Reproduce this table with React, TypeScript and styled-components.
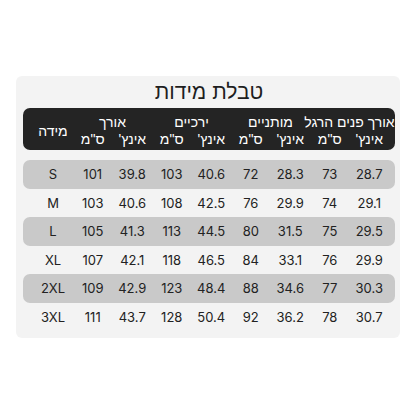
import * as React from 'react'
import styled, {createGlobalStyle} from 'styled-components'

const GlobalStyle = createGlobalStyle`
  html, body {
    margin: 0;
    padding: 0;
    background: #fff;
  }
`

const Page = styled.div`
  width: 416px;
  height: 416px;
  box-sizing: border-box;
  padding: 76px 16px 0 16px;
  background: #fff;
`

const Card = styled.div`
  width: 384px;
  box-sizing: border-box;
  padding: 0 5px 7px 7px;
  background: #f3f3f3;
  border-radius: 6px;
`

const Title = styled.h1`
  margin: 0;
  height: 32px;
  display: flex;
  align-items: center;
  justify-content: center;
  direction: rtl;
  font-family: "Liberation Sans", "DejaVu Sans", sans-serif;
  font-size: 21px;
  font-weight: 400;
  color: #1e1e1e;
`

const HeaderBar = styled.div`
  display: grid;
  grid-template-columns: 40px repeat(8, 1fr);
  grid-template-rows: 17px 17px;
  align-content: center;
  height: 42px;
  box-sizing: border-box;
  padding: 3px 6px 0 10px;
  margin-bottom: 10px;
  background: #242424;
  border-radius: 7px;
  color: #fff;
  font-family: "Liberation Sans", "DejaVu Sans", sans-serif;
  font-size: 14px;
`

const HeadCell = styled.div<{$span?: number; $rows?: number}>`
  direction: rtl;
  display: flex;
  align-items: center;
  justify-content: center;
  white-space: nowrap;
  grid-column: span ${p => p.$span || 1};
  grid-row: span ${p => p.$rows || 1};
`

const Row = styled.div<{$shaded: boolean}>`
  display: grid;
  grid-template-columns: 40px repeat(8, 1fr);
  height: 28.5px;
  padding: 0 6px 0 10px;
  background: ${p => (p.$shaded ? '#c9c9c9' : 'transparent')};
  border-radius: 7px;
  font-family: Inter, "Liberation Sans", sans-serif;
  font-size: 13px;
  color: #222;
`

const Cell = styled.div`
  display: flex;
  align-items: center;
  justify-content: center;
`

const groups = ['אורך', 'ירכיים', 'מותניים', 'אורך פנים הרגל']

const rows = [
  ['S', '101', '39.8', '103', '40.6', '72', '28.3', '73', '28.7'],
  ['M', '103', '40.6', '108', '42.5', '76', '29.9', '74', '29.1'],
  ['L', '105', '41.3', '113', '44.5', '80', '31.5', '75', '29.5'],
  ['XL', '107', '42.1', '118', '46.5', '84', '33.1', '76', '29.9'],
  ['2XL', '109', '42.9', '123', '48.4', '88', '34.6', '77', '30.3'],
  ['3XL', '111', '43.7', '128', '50.4', '92', '36.2', '78', '30.7'],
]

export default function App() {
  return (
    <Page>
      <GlobalStyle/>
      <Card>
        <Title>טבלת מידות</Title>
        <HeaderBar>
          <HeadCell $rows={2}>מידה</HeadCell>
          {groups.map(g => <HeadCell key={g} $span={2}>{g}</HeadCell>)}
          {groups.map(g => (
            <React.Fragment key={g + '-units'}>
              <HeadCell>ס"מ</HeadCell>
              <HeadCell>אינץ'</HeadCell>
            </React.Fragment>
          ))}
        </HeaderBar>
        {rows.map((r, i) => (
          <Row key={r[0]} $shaded={i % 2 === 0}>
            {r.map((v, j) => <Cell key={j}>{v}</Cell>)}
          </Row>
        ))}
      </Card>
    </Page>
  )
}
